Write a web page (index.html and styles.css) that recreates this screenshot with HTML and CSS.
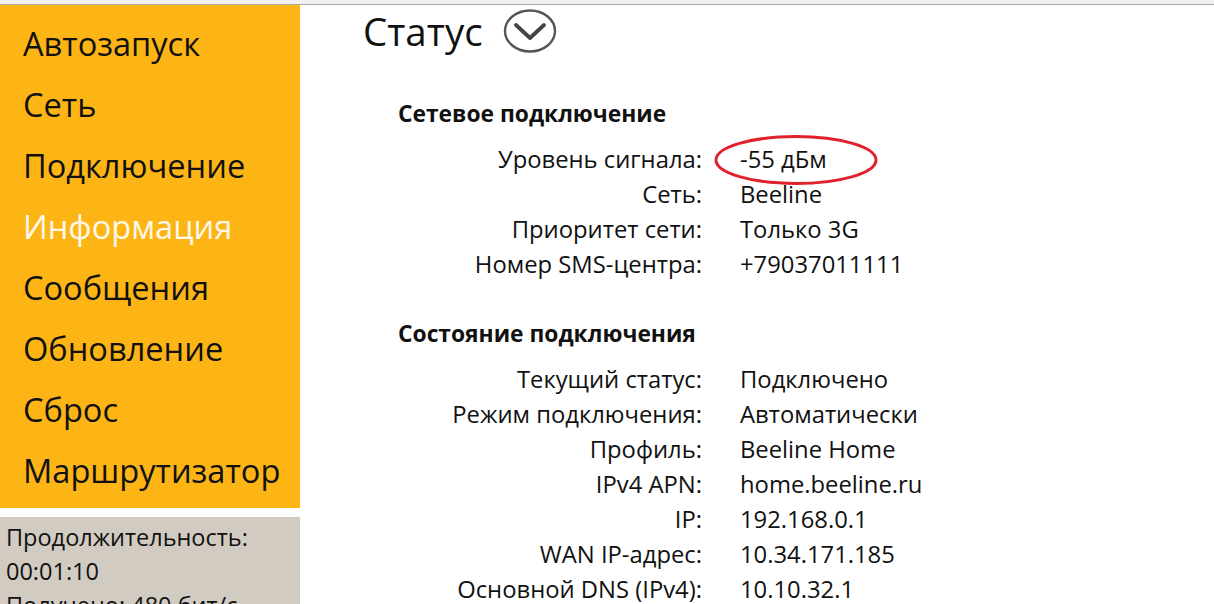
FILE: index.html
```html
<!DOCTYPE html>
<html lang="ru">
<head>
  <meta charset="UTF-8">
  <title>Статус</title>
  <link rel="stylesheet" href="styles.css">
</head>
<body>
  <div class="topbar"></div>

  <div class="layout">
    <!-- Left column: menu + traffic -->
    <div class="side">
      <ul class="menu">
        <li>Автозапуск</li>
        <li>Сеть</li>
        <li>Подключение</li>
        <li class="active">Информация</li>
        <li>Сообщения</li>
        <li>Обновление</li>
        <li>Сброс</li>
        <li>Маршрутизатор</li>
      </ul>
      <div class="traffic">
        <div>Продолжительность:</div>
        <div>00:01:10</div>
        <div>Получено: 480 бит/с</div>
      </div>
    </div>

    <!-- Right column: status -->
    <div class="main">
      <h1 class="title">
        Статус
        <svg class="toggle" width="54" height="44" viewBox="0 0 54 44">
          <ellipse cx="27" cy="22" rx="25" ry="20.5" fill="none" stroke="#555" stroke-width="2.4"/>
          <polyline points="13,16 27,29 41,16" fill="none" stroke="#444" stroke-width="3.8" stroke-linecap="round" stroke-linejoin="round"/>
        </svg>
      </h1>

      <div class="section">
        <h2>Сетевое подключение</h2>
        <div class="row">
          <span class="label">Уровень сигнала:</span>
          <span class="value marked">-55 дБм
            <svg class="circle-mark" width="166" height="52" viewBox="0 0 166 52">
              <ellipse cx="83" cy="26" rx="80" ry="23.5" fill="none" stroke="#e0222c" stroke-width="3"/>
            </svg>
          </span>
        </div>
        <div class="row"><span class="label">Сеть:</span><span class="value">Beeline</span></div>
        <div class="row"><span class="label">Приоритет сети:</span><span class="value">Только 3G</span></div>
        <div class="row"><span class="label">Номер SMS-центра:</span><span class="value">+79037011111</span></div>
      </div>

      <div class="section">
        <h2>Состояние подключения</h2>
        <div class="row"><span class="label">Текущий статус:</span><span class="value">Подключено</span></div>
        <div class="row"><span class="label">Режим подключения:</span><span class="value">Автоматически</span></div>
        <div class="row"><span class="label">Профиль:</span><span class="value">Beeline Home</span></div>
        <div class="row"><span class="label">IPv4 APN:</span><span class="value">home.beeline.ru</span></div>
        <div class="row"><span class="label">IP:</span><span class="value">192.168.0.1</span></div>
        <div class="row"><span class="label">WAN IP-адрес:</span><span class="value">10.34.171.185</span></div>
        <div class="row"><span class="label">Основной DNS (IPv4):</span><span class="value">10.10.32.1</span></div>
      </div>
    </div>
  </div>
</body>
</html>
```

FILE: styles.css
```css
html, body {
  margin: 0;
  height: 604px;
  overflow: hidden;
}

body {
  font-family: "Open Sans", "Noto Sans", sans-serif;
  background: #fff;
  color: #111;
}

.topbar {
  height: 4px;
  background: #f0f0f0;
  border-bottom: 1px solid #a9a9a9;
}

.layout {
  display: flex;
}

.side {
  width: 300px;
  flex-shrink: 0;
}

.menu {
  list-style: none;
  margin: 0;
  padding: 8px 0 7px 23px;
  background: #fdb515;
}

.menu li {
  font-size: 32.6px;
  line-height: 61px;
  color: #111;
}

.menu li.active {
  color: #fff8ea;
}

.traffic {
  margin-top: 9px;
  background: #d1cbc2;
  padding: 3px 0 0 6px;
  font-size: 23.5px;
  line-height: 34px;
  height: 90px;
}

.main {
  padding-left: 63px;
}

.title {
  margin: 2px 0 0;
  font-size: 38.5px;
  font-weight: normal;
  line-height: 48px;
  display: flex;
  align-items: center;
  gap: 20px;
}

.toggle {
  display: block;
}

.section {
  padding-left: 35px;
  margin-top: 45px;
}

.section + .section {
  margin-top: 38px;
}

h2 {
  margin: 0 0 14px;
  font-size: 22.8px;
  font-weight: bold;
  line-height: 28px;
}

.row {
  display: grid;
  grid-template-columns: 304px 1fr;
  column-gap: 38px;
  font-size: 23.8px;
  line-height: 35px;
}

.label {
  text-align: right;
}

.marked {
  position: relative;
}

.circle-mark {
  position: absolute;
  left: -27px;
  top: -8px;
}
```
